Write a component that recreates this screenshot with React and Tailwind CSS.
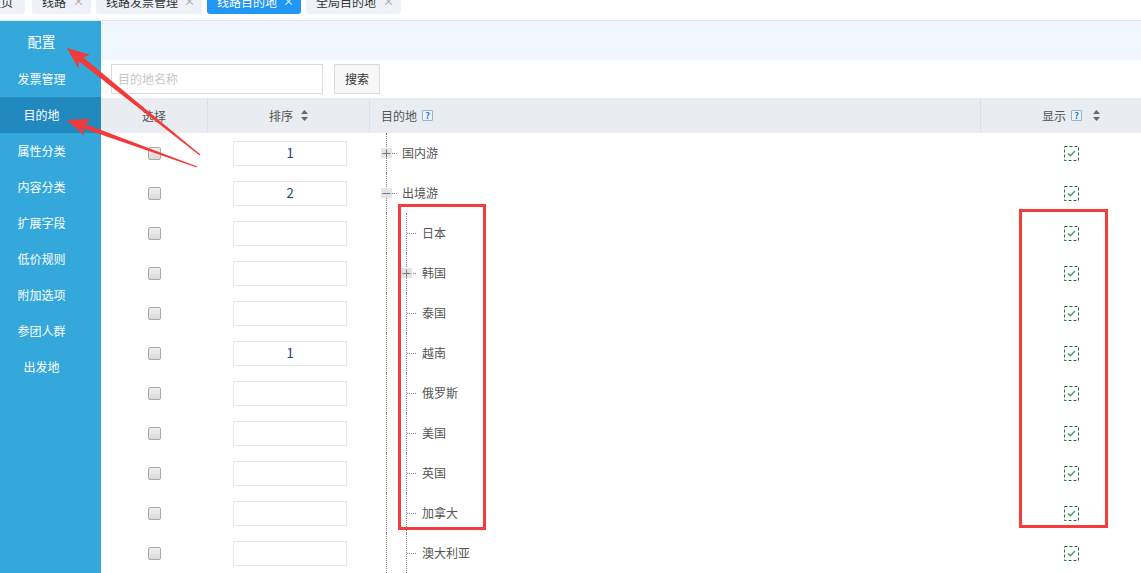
import React from 'react';

const tabs = [
  { label: '主页', w: 'w-[46px]', closable: false },
  { label: '线路', w: 'w-[59px]', closable: true },
  { label: '线路发票管理', w: 'w-[106px]', closable: true },
  { label: '线路目的地', w: 'w-[94px]', closable: true, active: true },
  { label: '全局目的地', w: 'w-[95px]', closable: true },
];

const menu = ['发票管理', '目的地', '属性分类', '内容分类', '扩展字段', '低价规则', '附加选项', '参团人群', '出发地'];

const rows = [
  { order: '1', level: 0, name: '国内游', toggle: 'plus' },
  { order: '2', level: 0, name: '出境游', toggle: 'minus' },
  { order: '', level: 1, name: '日本' },
  { order: '', level: 1, name: '韩国', toggle: 'plus' },
  { order: '', level: 1, name: '泰国' },
  { order: '1', level: 1, name: '越南' },
  { order: '', level: 1, name: '俄罗斯' },
  { order: '', level: 1, name: '美国' },
  { order: '', level: 1, name: '英国' },
  { order: '', level: 1, name: '加拿大' },
  { order: '', level: 1, name: '澳大利亚' },
];

const font = { fontFamily: '"Noto Sans CJK SC", "Noto Sans", sans-serif' };

const SortIcon = () => (
  <svg width="7" height="11" viewBox="0 0 7 11" className="ml-[8px]">
    <path d="M3.5 0 L7 4 L0 4 Z" fill="#666" />
    <path d="M3.5 11 L7 7 L0 7 Z" fill="#666" />
  </svg>
);

const HelpIcon = () => (
  <span className="ml-[5px] inline-flex h-[11px] w-[11px] items-center justify-center rounded-[1px] border border-[#9ab3cc] bg-[#eef3f8] text-[9px] font-bold leading-none text-[#1a82d8]">
    ?
  </span>
);

const ToggleBox = ({ type }) => (
  <span className="absolute left-[-6px] top-1/2 flex h-[10px] w-[11px] -translate-y-1/2 items-center justify-center bg-[#e2e4e8]">
    <svg width="9" height="9" viewBox="0 0 9 9">
      <path d="M0.5 4.5 H8.5" stroke="#777" strokeWidth="1" />
      {type === 'plus' && <path d="M4.5 0.5 V8.5" stroke="#777" strokeWidth="1" />}
    </svg>
  </span>
);

const ShowIcon = () => (
  <svg width="15" height="15" viewBox="0 0 15 15">
    <rect x="0.5" y="0.5" width="14" height="14" fill="none" stroke="#1c6e3a" strokeDasharray="3 2" />
    <path d="M4 7.5 L6.3 9.8 L11 5" fill="none" stroke="#3f9a5c" strokeWidth="1.4" />
  </svg>
);

const Checkbox = () => (
  <span className="block h-[13px] w-[13px] rounded-[2px] border border-[#a9a9a9] bg-gradient-to-b from-[#f0f0f0] to-[#d9d9d9]" />
);

const TreeCell = ({ row }) => {
  if (row.level === 0) {
    return (
      <div className="flex h-full pl-[16px]">
        <div className="relative flex h-full items-center border-l border-dotted border-[#888] pl-[5px]">
          {row.toggle && <ToggleBox type={row.toggle} />}
          <span className="w-[5px] border-t border-dotted border-[#888]" />
          <span className="ml-[5px] text-[12px] text-[#555]">{row.name}</span>
        </div>
      </div>
    );
  }
  return (
    <div className="flex h-full pl-[16px]">
      <div className="h-full w-[20px] border-l border-dotted border-[#888]" />
      <div className="relative flex h-full items-center border-l border-dotted border-[#888]">
        {row.toggle && <ToggleBox type={row.toggle} />}
        <span className={`border-t border-dotted border-[#888] ${row.toggle ? 'ml-[6px] w-[3px]' : 'w-[9px]'}`} />
        <span className="ml-[6px] text-[12px] text-[#555]">{row.name}</span>
      </div>
    </div>
  );
};

const Annotations = () => (
  <svg className="pointer-events-none absolute left-0 top-0" width="1141" height="573" viewBox="0 0 1141 573">
    <polygon
      fill="#f23a3a"
      points="67,48 89.9,54.8 83.4,57.4 200.4,154.6 199.6,155.4 78.8,61.2 78.5,68.8"
    />
    <polygon
      fill="#f23a3a"
      points="67,120 90.8,119 85.2,123.9 197.2,166.4 196.8,167.6 82.6,128.3 84.6,136"
    />
    <rect x="399.5" y="205.5" width="85" height="323" fill="none" stroke="#f43c3c" strokeWidth="3" />
    <rect x="1020.5" y="210.5" width="86" height="316" fill="none" stroke="#f43c3c" strokeWidth="3" />
  </svg>
);

const App = () => {
  return (
    <div className="relative h-[573px] w-[1141px] overflow-hidden bg-white" style={font}>
      {/* tab strip, scrolled so only the lower part of the tabs shows */}
      <div className="h-[21px] overflow-hidden border-b border-[#dde7f4] bg-white">
        <div className="-ml-[21px] -mt-[11px] flex gap-[5px]">
          {tabs.map((t) => (
            <div
              key={t.label}
              className={`flex h-[25px] shrink-0 items-center justify-between rounded-[3px] pl-[10px] pr-[7px] text-[12px] leading-none ${t.w} ${
                t.active ? 'bg-[#2196f3] text-white' : 'bg-[#eef1f8] text-[#333]'
              } ${t.closable ? '' : 'mr-[2px]'}`}
            >
              <span>{t.label}</span>
              {t.closable && (
                <span className={`text-[11px] ${t.active ? 'text-white' : 'text-[#999]'}`}>×</span>
              )}
            </div>
          ))}
        </div>
      </div>

      <div className="flex h-[552px]">
        {/* sidebar */}
        <div className="w-[101px] shrink-0 bg-[#35a8db] text-white">
          <div className="flex h-[40px] items-center justify-center pr-[18px] text-[14px]">配置</div>
          {menu.map((m) => (
            <div
              key={m}
              className={`flex h-[36px] items-center justify-center pr-[18px] text-[12px] ${
                m === '目的地' ? 'bg-[#2189be]' : ''
              }`}
            >
              {m}
            </div>
          ))}
        </div>

        {/* main */}
        <div className="flex-1">
          <div className="h-[39px] bg-[#f0f7fe]" />
          <div className="flex h-[38px] items-start gap-[11px] px-[10px] pt-[4px]">
            <div className="flex h-[30px] w-[212px] items-center border border-[#dcdcdc] bg-white pl-[6px] text-[12px] text-[#c8c8c8]">
              目的地名称
            </div>
            <div className="flex h-[30px] w-[46px] items-center justify-center border border-[#dcdcdc] bg-[#f7f7f7] text-[12px] text-[#333]">
              搜索
            </div>
          </div>

          {/* table header */}
          <div className="flex h-[35px] bg-[#e9ecf1] text-[12px] text-[#555]">
            <div className="flex w-[107px] items-center justify-center border-r border-[#dde1e6]">选择</div>
            <div className="flex w-[162px] items-center justify-center border-r border-[#dde1e6]">
              排序
              <SortIcon />
            </div>
            <div className="flex w-[611px] items-center border-r border-[#dde1e6] pl-[11px]">
              目的地
              <HelpIcon />
            </div>
            <div className="flex flex-1 items-center justify-center pl-[20px]">
              显示
              <HelpIcon />
              <span className="ml-[3px]">
                <SortIcon />
              </span>
            </div>
          </div>

          {/* rows */}
          {rows.map((r, i) => (
            <div key={i} className="flex h-[40px]">
              <div className="flex w-[107px] items-center justify-center">
                <Checkbox />
              </div>
              <div className="flex w-[162px] items-center pl-[25px]">
                <div className="flex h-[25px] w-[114px] items-center justify-center border border-[#e6e6e6] text-[13px] text-[#1f3c78]">
                  {r.order}
                </div>
              </div>
              <div className="w-[611px]">
                <TreeCell row={r} />
              </div>
              <div className="flex flex-1 items-center justify-center pl-[20px]">
                <ShowIcon />
              </div>
            </div>
          ))}
        </div>
      </div>

      <Annotations />
    </div>
  );
};

export default App;
